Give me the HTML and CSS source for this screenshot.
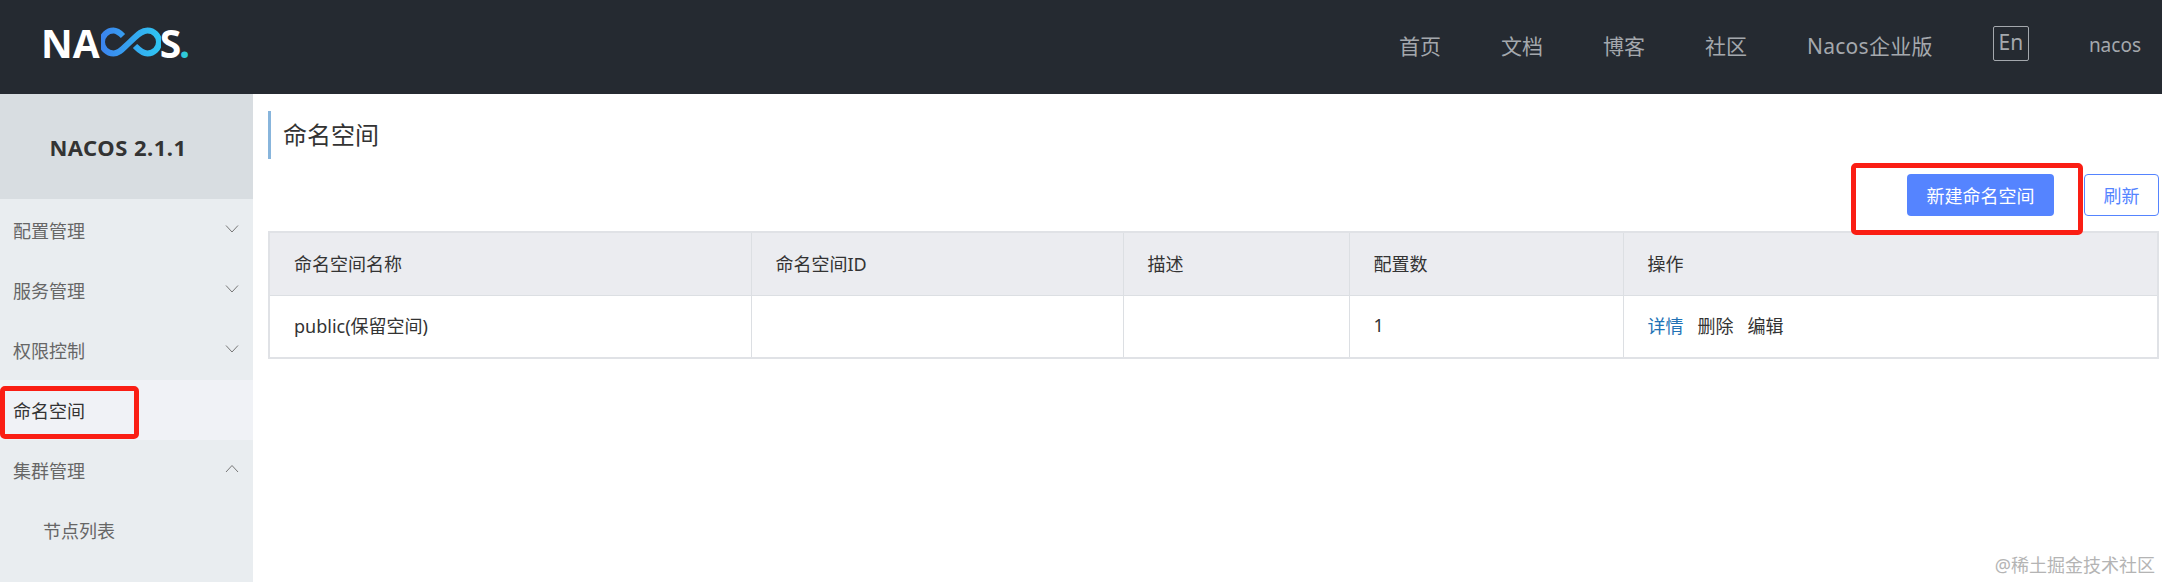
FILE: index.html
```html
<!DOCTYPE html>
<html lang="zh-CN">
<head>
    <meta charset="UTF-8">
    <meta name="viewport" content="width=device-width, initial-scale=1.0">
    <title>Nacos</title>
    <link rel="stylesheet" href="styles.css">
</head>
<body>
    <header class="top-bar">
        <div class="logo">
            <span>NA</span>
            <svg class="logo-loop" width="60" height="30" viewBox="0 0 60 30" fill="none" aria-hidden="true">
                <defs>
                    <linearGradient id="loopColor" x1="0" y1="0" x2="1" y2="0">
                        <stop offset="0" stop-color="#3b84ee"/>
                        <stop offset="1" stop-color="#2fc4f2"/>
                    </linearGradient>
                </defs>
                <path d="M22 9C19 6 16 3.500 12.500 3.500A11.500 11.500 0 0 0 12.500 26.500C19 26.500 23 20 29 15C35 10 39 3.500 46.500 3.500A11.500 11.500 0 0 1 46.500 26.500C41 26.500 37 22 34 19" stroke="url(#loopColor)" stroke-width="6" stroke-linecap="butt"/>
            </svg>
            <span>S</span><span class="logo-dot">.</span>
        </div>
        <nav class="top-nav">
            <a>首页</a>
            <a>文档</a>
            <a>博客</a>
            <a>社区</a>
            <a class="nav-wide">Nacos企业版</a>
            <a class="lang-btn">En</a>
            <a class="user-name">nacos</a>
        </nav>
    </header>

    <div class="layout">
        <aside class="sidebar">
            <div class="version">NACOS 2.1.1</div>
            <ul class="menu">
                <li class="menu-item">配置管理
                    <svg class="chevron" width="14" height="10" viewBox="0 0 14 10" fill="none"><path d="M1 1.500L7 8L13 1.500"/></svg>
                </li>
                <li class="menu-item">服务管理
                    <svg class="chevron" width="14" height="10" viewBox="0 0 14 10" fill="none"><path d="M1 1.500L7 8L13 1.500"/></svg>
                </li>
                <li class="menu-item">权限控制
                    <svg class="chevron" width="14" height="10" viewBox="0 0 14 10" fill="none"><path d="M1 1.500L7 8L13 1.500"/></svg>
                </li>
                <li class="menu-item active">命名空间
                    <div class="mark mark-menu"></div>
                </li>
                <li class="menu-item">集群管理
                    <svg class="chevron" width="14" height="10" viewBox="0 0 14 10" fill="none"><path d="M1 8L7 1.500L13 8"/></svg>
                </li>
                <li class="menu-item sub-item">节点列表</li>
            </ul>
        </aside>

        <main class="content">
            <h2 class="page-title">命名空间</h2>

            <div class="toolbar">
                <div class="mark mark-toolbar"></div>
                <button class="btn btn-primary">新建命名空间</button>
                <button class="btn btn-normal">刷新</button>
            </div>

            <table class="ns-table">
                <colgroup>
                    <col class="col-name">
                    <col class="col-id">
                    <col class="col-desc">
                    <col class="col-count">
                    <col>
                </colgroup>
                <thead>
                    <tr>
                        <th>命名空间名称</th>
                        <th>命名空间ID</th>
                        <th>描述</th>
                        <th>配置数</th>
                        <th>操作</th>
                    </tr>
                </thead>
                <tbody>
                    <tr>
                        <td>public(保留空间)</td>
                        <td></td>
                        <td></td>
                        <td>1</td>
                        <td class="actions"><a class="link">详情</a><a>删除</a><a>编辑</a></td>
                    </tr>
                </tbody>
            </table>
        </main>
    </div>

    <div class="watermark">@稀土掘金技术社区</div>
</body>
</html>
```

FILE: styles.css
```css
html, body {
    height: 100%;
}

body {
    font-family: "Noto Sans", "Noto Sans CJK SC", sans-serif;
    margin: 0;
    background-color: #fff;
    color: #333;
    font-size: 18px;
    overflow: hidden;
}

.top-bar {
    height: 94px;
    background-color: #252a31;
    display: flex;
    align-items: center;
    justify-content: space-between;
    padding: 0 21px 0 41px;
}

.logo {
    display: flex;
    align-items: center;
    color: #fff;
    font-family: "Open Sans", sans-serif;
    font-weight: 700;
    font-size: 39px;
    line-height: 1;
    margin-top: -10px;
}

.logo-loop {
    margin: 0 -1px 0 1px;
}

.logo-dot {
    color: #2fc9d8;
    margin-left: -2px;
}

.top-nav {
    display: flex;
    align-items: center;
    gap: 60px;
    color: #a4a8ad;
    font-size: 21px;
    margin-top: -4px;
}

.nav-wide {
    letter-spacing: 0.3px;
}

.lang-btn {
    width: 34px;
    height: 33px;
    line-height: 30px;
    border: 1px solid #a4a8ad;
    border-radius: 2px;
    text-align: center;
    box-sizing: content-box;
    margin-top: -3px;
}

.user-name {
    font-size: 19px;
}

.layout {
    display: flex;
    height: 488px;
}

.sidebar {
    width: 253px;
    flex-shrink: 0;
    background-color: #e9edf0;
}

.version {
    height: 105px;
    line-height: 107px;
    background-color: #d8dde1;
    text-align: center;
    font-family: "Noto Sans", sans-serif;
    font-weight: 700;
    font-size: 22px;
    letter-spacing: 0.5px;
    padding-right: 17px;
    margin-bottom: 1px;
}

.menu {
    list-style: none;
    margin: 0;
    padding: 0;
}

.menu-item {
    position: relative;
    height: 60px;
    line-height: 62px;
    padding-left: 13px;
    color: #666;
}

.menu-item.active {
    background-color: #f0f2f6;
    color: #333;
}

.sub-item {
    padding-left: 43px;
}

.chevron {
    position: absolute;
    right: 14px;
    top: 24px;
    stroke: #777;
    stroke-width: 1;
}

/* red annotation boxes drawn over the screenshot */
.mark {
    position: absolute;
    box-sizing: border-box;
    border: 5px solid #fa1e14;
    border-radius: 5px;
}

.mark-menu {
    left: 0;
    top: 6px;
    width: 139px;
    height: 53px;
}

.mark-toolbar {
    left: 1851px;
    top: 163px;
    width: 232px;
    height: 72px;
    margin-left: -268px;
    margin-top: -174px;
}

.content {
    flex: 1;
    padding: 17px 3px 0 15px;
    min-width: 0;
}

.page-title {
    margin: 0;
    height: 48px;
    line-height: 48px;
    border-left: 3px solid #88b5dc;
    padding-left: 12px;
    font-size: 24px;
    font-weight: 400;
}

.toolbar {
    position: relative;
    display: flex;
    justify-content: flex-end;
    gap: 30px;
    margin-top: 15px;
    margin-bottom: 15px;
}

.btn {
    height: 42px;
    border-radius: 4px;
    font-family: inherit;
    font-size: 18px;
    padding: 0;
}

.btn-primary {
    width: 147px;
    background-color: #5584ff;
    border: none;
    color: #fff;
}

.btn-normal {
    width: 75px;
    background-color: #fff;
    border: 1px solid #5584ff;
    color: #5584ff;
}

.ns-table {
    width: 100%;
    table-layout: fixed;
    border-collapse: collapse;
    border: 2px solid #e0e2e6;
}

.col-name {
    width: 482px;
}

.col-id {
    width: 372px;
}

.col-desc {
    width: 226px;
}

.col-count {
    width: 274px;
}

.ns-table th,
.ns-table td {
    box-sizing: border-box;
    height: 63px;
    padding: 0 0 0 24px;
    text-align: left;
    font-weight: 400;
    border-left: 1px solid #dcdfe3;
    border-bottom: 1px solid #dcdfe3;
}

.ns-table td {
    padding-bottom: 3px;
}

.ns-table th {
    background-color: #ebecf0;
    padding-bottom: 2px;
}

.actions a {
    margin-right: 14px;
}

.link {
    color: #2272b5;
}

.watermark {
    position: absolute;
    right: 7px;
    bottom: 5px;
    color: #b4b4b4;
    font-size: 18px;
}
```
